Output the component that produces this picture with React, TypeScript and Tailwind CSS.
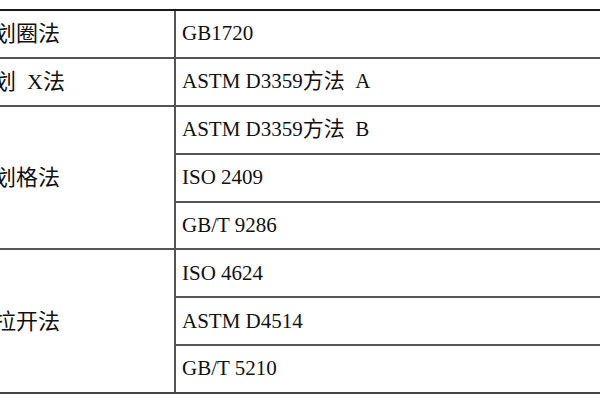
const groups = [
  { label: '划圈法', items: ['GB1720'] },
  { label: '划\u00a0\u00a0X法', items: ['ASTM D3359方法\u00a0\u00a0A'] },
  { label: '划格法', items: ['ASTM D3359方法\u00a0\u00a0B', 'ISO 2409', 'GB/T 9286'] },
  { label: '拉开法', items: ['ISO 4624', 'ASTM D4514', 'GB/T 5210'] },
];

export default function App() {
  return (
    <div
      className="h-[400px] w-[600px] overflow-hidden bg-white text-[21px] text-[#111]"
      style={{ fontFamily: '"Liberation Serif", "Noto Sans CJK SC", serif' }}
    >
      <div className="mt-[9px] border-t-2 border-b-2 border-t-[#1a1a1a] border-b-[#444]">
        {groups.map((g, gi) => (
          <div
            key={gi}
            className={`flex ${gi < groups.length - 1 ? 'border-b-2 border-[#555]' : ''}`}
          >
            <div className="-ml-[16px] flex w-[190px] shrink-0 items-center pl-[10px] text-[22px]">
              {g.label}
            </div>
            <div className="flex-1 border-l-2 border-[#555]">
              {g.items.map((it, i) =>
                i < g.items.length - 1 ? (
                  <div key={i} className="flex h-[47.9px] items-center border-b-2 border-[#555] pl-[6px]">
                    {it}
                  </div>
                ) : (
                  <div key={i} className="flex h-[45.9px] items-center pl-[6px]">
                    {it}
                  </div>
                )
              )}
            </div>
          </div>
        ))}
      </div>
    </div>
  );
}
